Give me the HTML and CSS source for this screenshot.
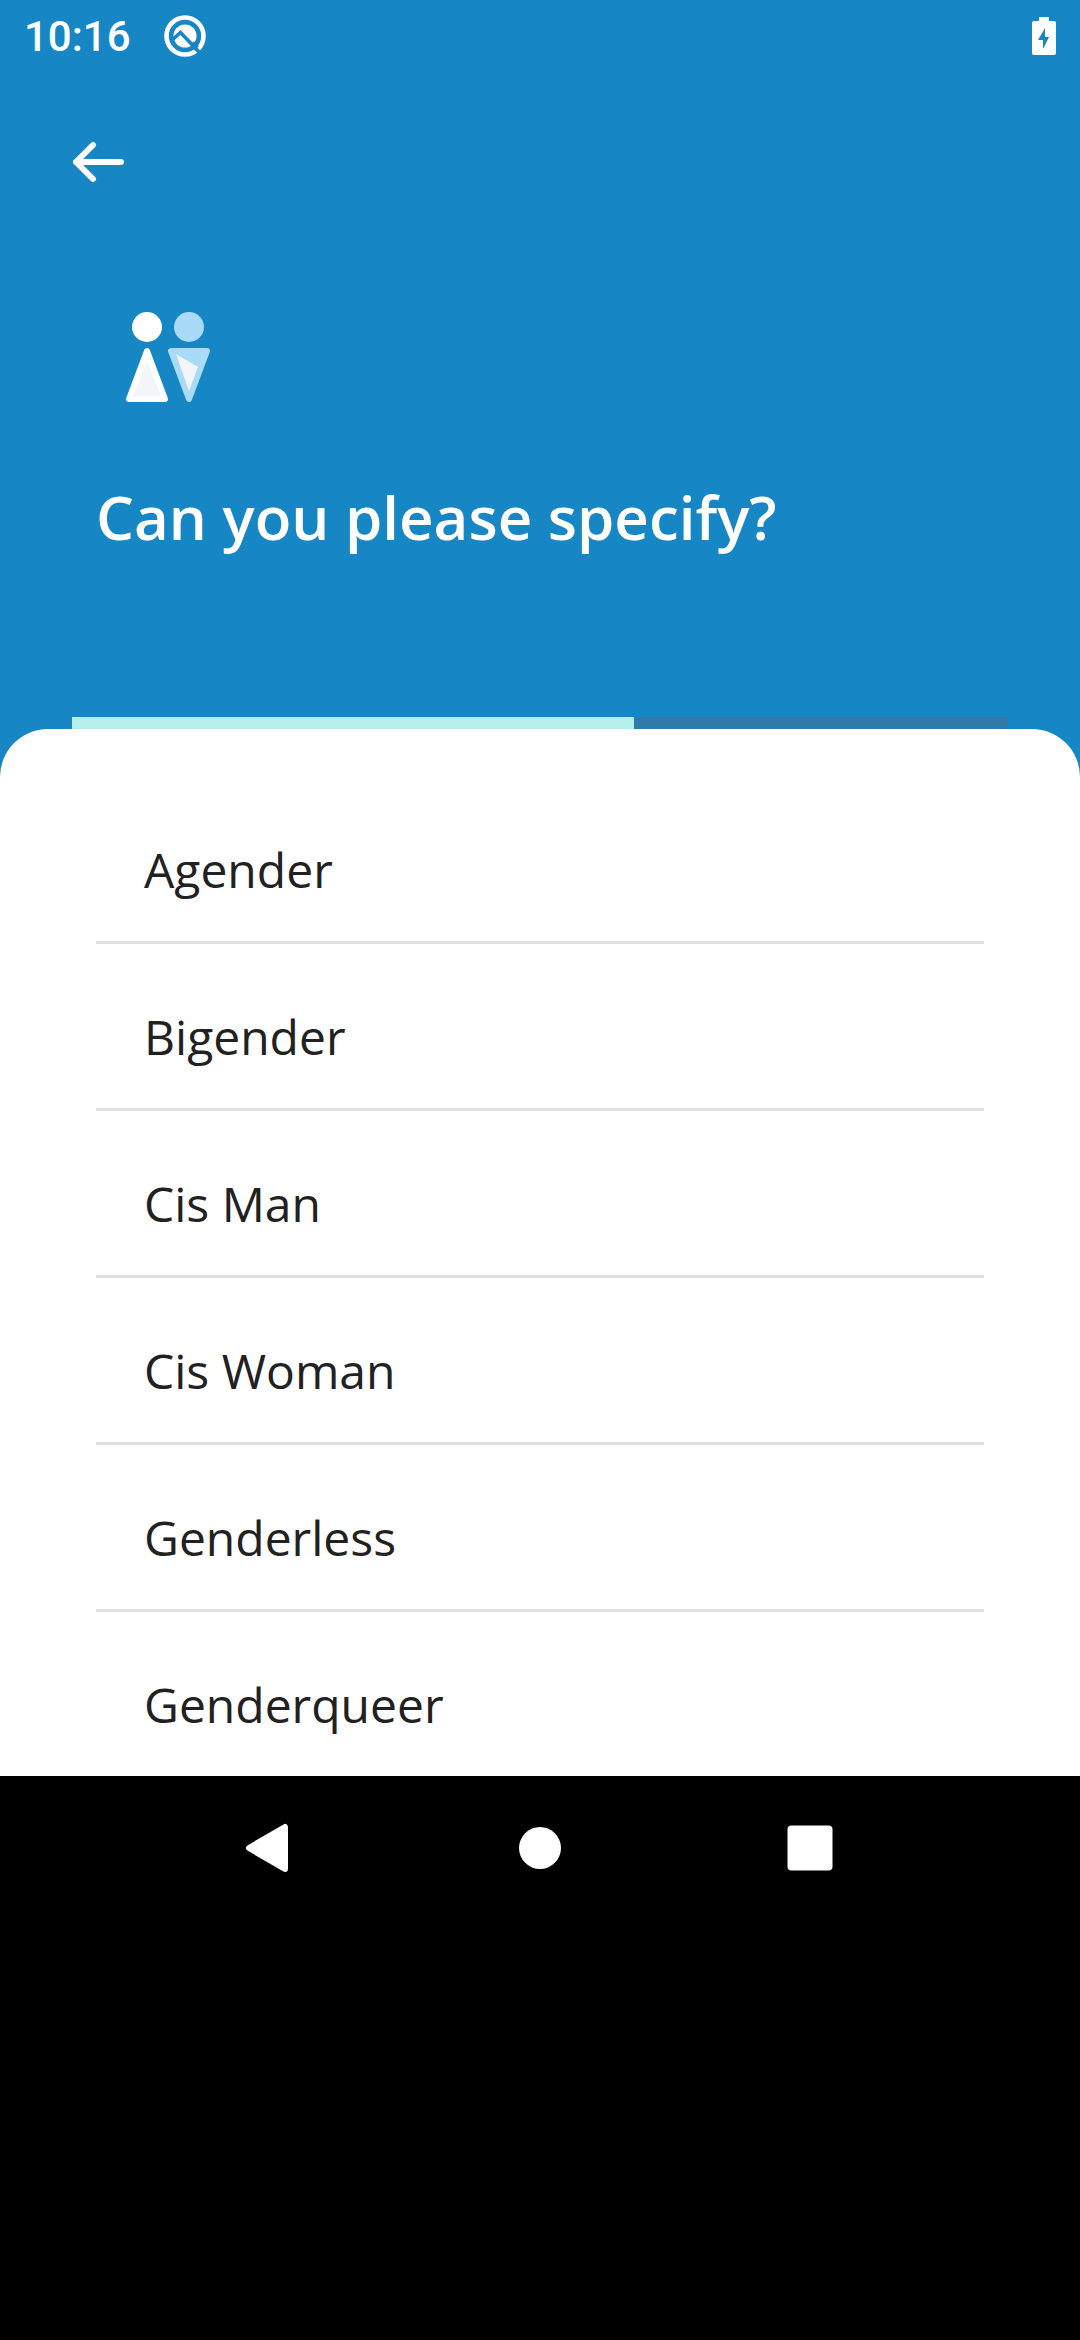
FILE: index.html
```html
<!DOCTYPE html>
<html lang="en">
<head>
<meta charset="utf-8">
<meta name="viewport" content="width=device-width, initial-scale=1">
<title>Can you please specify?</title>
<link rel="stylesheet" href="styles.css">
</head>
<body>
<div class="app">
  <div class="status-bar">
    <time class="clock">10:16</time>
    <svg class="status-icon" viewBox="0 0 48 48" aria-hidden="true">
      <circle cx="24" cy="24" r="18.5" fill="none" stroke="#fff" stroke-width="4.6"/>
      <circle cx="24" cy="24" r="11.5" fill="#fff"/>
      <path d="M11 28 L19.500 20.500 L39.500 41.500" fill="none" stroke="#1786c5" stroke-width="3.600"/>
      <path d="M31 31 L36 36" fill="none" stroke="#1786c5" stroke-width="5"/>
    </svg>
    <svg class="battery" viewBox="0 0 24 38" role="img" aria-label="Battery charging">
      <path fill="#fff" fill-rule="evenodd" d="M7 0h10v4h5a2 2 0 0 1 2 2v30a2 2 0 0 1-2 2H2a2 2 0 0 1-2-2V6a2 2 0 0 1 2-2h5zM13 11L6 23h5v9l6-12h-4z"/>
    </svg>
  </div>

  <header class="header">
    <button class="back" type="button" aria-label="Back">
      <svg class="back-icon" viewBox="0 0 96 96" aria-hidden="true">
        <path d="M45 31L28 48l17 17M28 48h45" fill="none" stroke="#fff" stroke-width="6" stroke-linecap="round" stroke-linejoin="round"/>
      </svg>
    </button>
    <div class="intro">
      <svg class="topic-icon" viewBox="0 0 144 96" aria-hidden="true">
        <circle cx="51" cy="21" r="15" fill="#fff"/>
        <circle cx="93" cy="21" r="15" fill="#a9dbf8"/>
        <path d="M51 45L33 93h36z" fill="#fff" stroke="#fff" stroke-width="6" stroke-linejoin="round"/>
        <path d="M51 55L37 90h28z" fill="#f4f5f8"/>
        <path d="M75 45h36L93 93z" fill="#a9dbf8" stroke="#a9dbf8" stroke-width="6" stroke-linejoin="round"/>
        <path d="M80 48l22 13-9 24z" fill="#f4f5f8"/>
      </svg>
      <h1 class="title">Can you please specify?</h1>
    </div>
    <div class="progress" role="progressbar" aria-label="Progress" aria-valuemin="0" aria-valuemax="100" aria-valuenow="60">
      <div class="progress-fill" style="width: 60%"></div>
    </div>
  </header>

  <main class="sheet">
    <ul class="options">
      <li class="item"><button class="option" type="button">Agender</button></li>
      <li class="item"><button class="option" type="button">Bigender</button></li>
      <li class="item"><button class="option" type="button">Cis Man</button></li>
      <li class="item"><button class="option" type="button">Cis Woman</button></li>
      <li class="item"><button class="option" type="button">Genderless</button></li>
      <li class="item"><button class="option" type="button">Genderqueer</button></li>
    </ul>
  </main>
</div>

<nav class="nav-bar" aria-label="System">
  <button class="nav-button" type="button" aria-label="Back">
    <svg class="nav-icon" viewBox="0 0 60 60" aria-hidden="true"><path d="M9 30L45 9v42z" fill="#fff" stroke="#fff" stroke-width="6" stroke-linejoin="round"/></svg>
  </button>
  <button class="nav-button" type="button" aria-label="Home">
    <svg class="nav-icon" viewBox="0 0 60 60" aria-hidden="true"><circle cx="30" cy="30" r="21" fill="#fff"/></svg>
  </button>
  <button class="nav-button" type="button" aria-label="Recent apps">
    <svg class="nav-icon" viewBox="0 0 60 60" aria-hidden="true"><rect x="7.500" y="7.500" width="45" height="45" rx="4" fill="#fff"/></svg>
  </button>
</nav>
</body>
</html>
```

FILE: styles.css
```css
* {
  box-sizing: border-box;
}

body {
  margin: 0;
  min-height: 100vh;
  background: #000;
  font-family: "Open Sans", "Noto Sans", sans-serif;
}

button {
  margin: 0;
  padding: 0;
  border: 0;
  background: none;
  color: inherit;
  font: inherit;
  cursor: pointer;
}

svg {
  display: block;
}

.app {
  background: #1786c5;
}

.status-bar {
  display: flex;
  align-items: center;
  height: 72px;
  padding: 0 24px;
  color: #fff;
}

.clock {
  padding-top: 2px;
  font-family: Roboto, sans-serif;
  font-size: 42px;
  font-weight: 500;
  line-height: 48px;
}

.status-icon {
  width: 48px;
  height: 48px;
  margin-left: 30px;
}

.battery {
  width: 24px;
  height: 38px;
  margin-left: auto;
}

.header {
  padding-top: 42px;
  color: #fff;
}

.back {
  display: block;
  margin-left: 48px;
}

.back-icon {
  width: 96px;
  height: 96px;
}

.intro {
  padding: 96px 96px 157px;
}

.topic-icon {
  width: 144px;
  height: 96px;
}

.title {
  margin: 72px 0 0;
  font-size: 60px;
  font-weight: 600;
  line-height: 86px;
}

.progress {
  height: 12px;
  margin: 0 72px;
  background: #2d7aab;
}

.progress-fill {
  height: 100%;
  background: #b7edeb;
}

.sheet {
  padding: 48px 96px 0;
  border-radius: 48px 48px 0 0;
  background: #fff;
  color: #212121;
}

.options {
  margin: 0;
  padding: 0;
  list-style: none;
}

.item + .item {
  border-top: 3px solid #e0e0e3;
}

.option {
  display: block;
  width: 100%;
  padding: 61px 48px 39px;
  font-size: 48px;
  line-height: 64px;
  text-align: left;
}

.nav-bar {
  display: flex;
  padding: 0 12.5%;
}

.nav-button {
  display: flex;
  flex: 1;
  align-items: center;
  justify-content: center;
  height: 144px;
}

.nav-icon {
  width: 60px;
  height: 60px;
}
```
